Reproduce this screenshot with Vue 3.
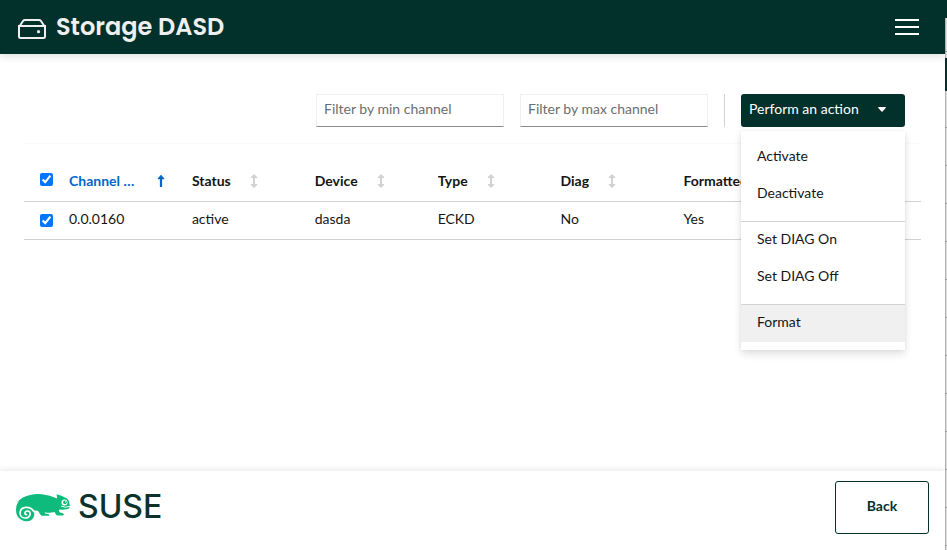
<script setup>
import { ref, computed } from 'vue'

const minChannel = ref('')
const maxChannel = ref('')
const menuOpen = ref(true)
const columns = [
  { id: 'id', label: 'Channel ID', sorted: true },
  { id: 'status', label: 'Status' },
  { id: 'device', label: 'Device' },
  { id: 'type', label: 'Type' },
  { id: 'diag', label: 'Diag' },
  { id: 'formatted', label: 'Formatted' },
  { id: 'partition', label: '' },
]
const rows = ref([
  { id: '0.0.0160', status: 'active', device: 'dasda', type: 'ECKD', diag: 'No', formatted: 'Yes', partition: '', selected: true },
])
const allSelected = computed({
  get: () => rows.value.every((r) => r.selected),
  set: (v) => rows.value.forEach((r) => { r.selected = v }),
})
const groups = [
  ['Activate', 'Deactivate'],
  ['Set DIAG On', 'Set DIAG Off'],
  ['Format'],
]
</script>

<template>
  <div class="screen">
    <div class="page">
      <header class="header">
        <h1>
          <svg class="drive" viewBox="0 0 28 20" width="28" height="20" aria-hidden="true">
            <path d="M1 8 L5.2 1.8 Q5.8 1 6.8 1 H21.2 Q22.2 1 22.8 1.8 L27 8" />
            <path d="M1 7 H27 V17.5 Q27 19 25.5 19 H2.5 Q1 19 1 17.5 Z" />
            <circle cx="20.5" cy="12.7" r="1.6" />
          </svg>
          <span>Storage DASD</span>
        </h1>
        <button class="burger" type="button" aria-label="Menu">
          <svg viewBox="0 0 24 16" width="24" height="16" aria-hidden="true">
            <path d="M0 0h24v2H0zM0 7h24v2H0zM0 14h24v2H0z" />
          </svg>
        </button>
      </header>

      <main class="main">
        <div class="toolbar">
          <input v-model="minChannel" class="filter" type="text" placeholder="Filter by min channel" aria-label="Filter by min channel">
          <input v-model="maxChannel" class="filter" type="text" placeholder="Filter by max channel" aria-label="Filter by max channel">
          <span class="divider"></span>
          <div class="dropdown">
            <button class="toggle" type="button" :aria-expanded="menuOpen" @click="menuOpen = !menuOpen">
              <span>Perform an action</span>
              <svg viewBox="0 0 8 5" width="8" height="5" aria-hidden="true"><path d="M0.6 0h6.8q.8.2.3.9L4.5 4.6q-.5.5-1 0L.3.9Q-.2.2.6 0z" /></svg>
            </button>
            <div v-if="menuOpen" class="menu">
              <div v-for="(group, i) in groups" :key="i" class="group">
                <button v-for="item in group" :key="item" type="button" :class="{ active: item === 'Format' }">{{ item }}</button>
              </div>
            </div>
          </div>
        </div>

        <table class="table">
          <thead>
            <tr>
              <th class="check"><input v-model="allSelected" type="checkbox" aria-label="Select all rows"></th>
              <th v-for="col in columns" :key="col.id" :class="{ column: col.label }">
                <button v-if="col.label" type="button" class="sort" :class="{ sorted: col.sorted }">
                  <span class="label">{{ col.label }}</span>
                  <svg v-if="col.sorted" viewBox="0 0 8 14" width="8" height="14" aria-hidden="true"><path d="M4 .8 7.3 4.4Q7.6 5.3 6.8 5.3H5.1V13H2.9V5.3H1.2Q.4 5.3.7 4.4z" /></svg>
                  <svg v-else viewBox="0 0 8 14" width="8" height="14" aria-hidden="true"><path d="M4 0 7.3 3.3Q7.6 4.1 6.8 4.1H5V9.9H6.8Q7.6 9.9 7.3 10.7L4 14 .7 10.7Q.4 9.9 1.2 9.9H3V4.1H1.2Q.4 4.1.7 3.3z" /></svg>
                </button>
              </th>
            </tr>
          </thead>
          <tbody>
            <tr v-for="row in rows" :key="row.id">
              <td class="check"><input v-model="row.selected" type="checkbox" :aria-label="row.id"></td>
              <td v-for="col in columns" :key="col.id">{{ row[col.id] }}</td>
            </tr>
          </tbody>
        </table>
      </main>

      <footer class="footer">
        <div class="brand">
          <svg viewBox="0 0 54 28" width="54" height="28" aria-hidden="true">
            <path class="body" d="M40.5 0.2 Q45.5 1.2 50.4 4.3 Q52.8 5.5 53.2 8 L54 12.7 Q53.6 14.9 50.6 15.3 Q47 16 44.4 15.4 Q42.4 15.3 43 17 Q43.4 18.8 45 18.7 Q47.6 18.7 47.8 20.2 Q48 21.5 46.5 21.6 H42 Q40.5 21.5 39.7 19.9 L38.4 18 Q34 19.5 28.6 18.3 Q28.7 19.9 31 19.8 Q33.6 20 33.4 21.7 H25.5 Q23.6 20.3 22.8 17.8 Q21.2 15.9 17.6 16.6 Q19.6 22.4 16 25.4 Q12.3 28.3 7.3 26.8 Q0 24 0 16 Q.2 7 7 3.6 Q15.2-.8 26 .2 Q34 1.2 41.2 4.4 Z" />
            <path class="curl" d="M17.6 17.4 C14.5 11.3 4.2 12.2 4 19 C3.9 25.4 14 25.7 14.2 19.6 C14.1 16 8.6 16.3 9 19.6 Q9.3 20.7 10.4 20.6" />
            <circle class="eye" cx="48.5" cy="8.5" r="3" />
            <circle class="body" cx="49" cy="8.3" r="1.9" />
            <circle class="eye" cx="49.7" cy="7.9" r=".6" />
            <path class="mouth" d="M53.5 12.5 Q49.5 14.1 45.5 12.3" />
          </svg>
          <span>SUSE</span>
        </div>
        <button class="back" type="button">Back</button>
      </footer>
    </div>
    <div class="edge" aria-hidden="true"></div>
  </div>
</template>

<style>
body {
  margin: 0;
}
</style>

<style scoped>
.screen {
  display: grid;
  grid-template-columns: minmax(0, 1fr) 2px;
  min-height: 100vh;
  font-family: Lato, sans-serif;
  font-size: 14px;
  line-height: 21px;
  color: #151515;
  background: #fff;
}
.screen * {
  box-sizing: border-box;
}
button,
input {
  font: inherit;
  color: inherit;
}
button {
  border: 0;
  background: none;
  padding: 0;
  cursor: pointer;
}
.page {
  display: flex;
  flex-direction: column;
  min-width: 0;
}
.header {
  display: flex;
  align-items: center;
  justify-content: space-between;
  height: 54px;
  padding: 0 26px 0 18px;
  background: #02312b;
  color: #efefef;
  box-shadow: 0 2px 8px rgba(0, 0, 0, 0.14);
}
h1 {
  display: flex;
  align-items: center;
  gap: 10px;
  margin: 0;
  font-family: Poppins, Inter, sans-serif;
  font-size: 24px;
  line-height: 32px;
  font-weight: 600;
}
.drive {
  margin-top: 4px;
  fill: none;
  stroke: #efefef;
  stroke-width: 2;
}
.drive circle {
  fill: #efefef;
  stroke: none;
}
.burger svg {
  display: block;
  fill: #fff;
}
.main {
  flex: 1;
  padding: 24px;
}
.toolbar {
  display: flex;
  justify-content: flex-end;
  gap: 16px;
  padding: 16px;
}
.filter {
  width: 188px;
  height: 33px;
  padding: 0 7px 4px;
  border: 1px solid #efefef;
  border-bottom-color: #8a8d90;
  border-radius: 0;
  background: #fff;
}
.filter::placeholder {
  color: #6a6e73;
  opacity: 1;
}
.divider {
  width: 1px;
  background: #d2d2d2;
}
.dropdown {
  position: relative;
}
.toggle {
  display: flex;
  align-items: center;
  gap: 19px;
  height: 33px;
  width: 164px;
  padding: 0 8px 4px;
  border-radius: 3px;
  background: #02312b;
  color: #fff;
}
.toggle svg {
  margin-top: 2px;
  fill: #fff;
}
.menu {
  position: absolute;
  top: 100%;
  left: 0;
  right: 0;
  margin-top: 4px;
  padding: 8px 0;
  background: #fff;
  box-shadow: 0 4px 8px rgba(3, 3, 3, 0.12), 0 0 4px rgba(3, 3, 3, 0.06);
}
.group + .group {
  margin-top: 8px;
  border-top: 1px solid #d2d2d2;
}
.menu button {
  display: block;
  width: 100%;
  height: 37px;
  padding: 0 16px 4px;
  text-align: left;
}
.menu button.active {
  background: #f0f0f0;
}
.table {
  width: 100%;
  table-layout: fixed;
  border-collapse: collapse;
  border-top: 1px solid #fafafa;
}
tr {
  border-bottom: 1px solid #d2d2d2;
}
th,
td {
  padding: 0;
  text-align: left;
}
th {
  height: 58px;
  padding-top: 16px;
}
td {
  height: 38px;
  padding-bottom: 4px;
}
.column {
  width: 13.7%;
}
.check {
  width: 45px;
  padding-left: 16px;
}
th.check {
  padding-top: 14px;
}
td.check {
  padding-bottom: 1px;
}
.check input {
  display: block;
  width: 13px;
  height: 13px;
  margin: 0;
  accent-color: #0075ff;
}
.sort {
  display: flex;
  align-items: center;
  gap: 19px;
  font-weight: 700;
}
.sort svg {
  flex: none;
  fill: #d2d2d2;
}
.sort .label {
  max-width: 69px;
  overflow: hidden;
  text-overflow: ellipsis;
  white-space: nowrap;
}
.sorted {
  color: #0066cc;
}
.sort.sorted svg {
  fill: #0066cc;
}
.footer {
  display: flex;
  align-items: center;
  justify-content: space-between;
  height: 79px;
  padding: 0 16px 6px;
  box-shadow: 0 -1px 6px rgba(0, 0, 0, 0.1);
}
.brand {
  display: flex;
  align-items: center;
  gap: 8px;
  color: #0c322c;
  font-family: Inter, sans-serif;
  font-size: 32px;
  line-height: 32px;
  font-weight: 500;
}
.brand span {
  padding-bottom: 2px;
}
.body {
  fill: #0fbb7c;
}
.curl,
.mouth {
  fill: none;
  stroke: #fff;
  stroke-width: 1.7;
  stroke-linecap: round;
}
.mouth {
  stroke-width: 1;
}
.eye {
  fill: #fff;
}
.back {
  width: 94px;
  height: 53px;
  padding-bottom: 4px;
  border: 1px solid #02312b;
  border-radius: 3px;
  color: #02312b;
  font-weight: 700;
}
.edge {
  background:
    linear-gradient(#02312b 18px, transparent 18px, transparent 58px, #02312b 58px, #02312b 91px, transparent 91px),
    repeating-linear-gradient(transparent 0 13px, #969696 13px 14px, transparent 14px 38px),
    linear-gradient(90deg, #b4b4b4 1px, #dedede 1px);
}
</style>
